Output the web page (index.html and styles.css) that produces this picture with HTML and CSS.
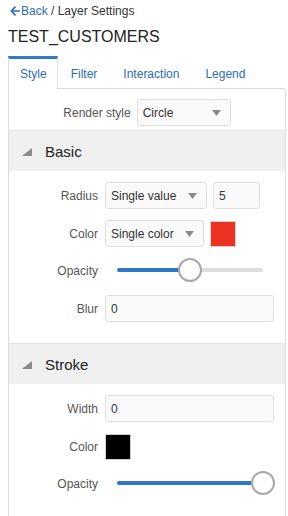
FILE: index.html
```html
<!DOCTYPE html>
<html>
<head>
<meta charset="utf-8">
<link rel="stylesheet" href="styles.css">
</head>
<body>
<div class="crumb">
  <a class="back"><svg class="back-arrow" width="10" height="10" viewBox="0 0 10 10"><path d="M5 1.2 L1.3 5 L5 8.8 M1.3 5 H9.5" fill="none" stroke="#2e6db0" stroke-width="1.7" stroke-linecap="round" stroke-linejoin="round"/></svg>Back</a><span class="sep">&nbsp;/ Layer Settings</span>
</div>
<h1 class="title">TEST_CUSTOMERS</h1>
<div class="tabs">
  <div class="tab active">Style</div>
  <div class="tab">Filter</div>
  <div class="tab">Interaction</div>
  <div class="tab">Legend</div>
</div>
<div class="panel">
  <div class="render-row">
    <span class="label">Render style</span>
    <div class="select w-render"><span>Circle</span><svg class="caret" width="9" height="6" viewBox="0 0 9 6"><path d="M0 0 H9 L4.5 6 Z" fill="#8a8a8a"/></svg></div>
  </div>

  <div class="section-head"><svg class="tri" width="10" height="8" viewBox="0 0 10 8"><path d="M10 0 V8 H0 Z" fill="#8c8c8c"/></svg><span>Basic</span></div>
  <div class="rows">
    <div class="row">
      <span class="label">Radius</span>
      <div class="field">
        <div class="select w-radius"><span>Single value</span><svg class="caret" width="9" height="6" viewBox="0 0 9 6"><path d="M0 0 H9 L4.5 6 Z" fill="#8a8a8a"/></svg></div>
        <div class="input w-num">5</div>
      </div>
    </div>
    <div class="row">
      <span class="label">Color</span>
      <div class="field">
        <div class="select w-color"><span>Single color</span><svg class="caret" width="9" height="6" viewBox="0 0 9 6"><path d="M0 0 H9 L4.5 6 Z" fill="#8a8a8a"/></svg></div>
        <div class="swatch red"></div>
      </div>
    </div>
    <div class="row row-slider">
      <span class="label">Opacity</span>
      <div class="slider">
        <div class="track"><div class="fill" style="width:50%"></div></div>
        <div class="thumb" style="left:50%"></div>
      </div>
    </div>
    <div class="row">
      <span class="label">Blur</span>
      <div class="input">0</div>
    </div>
  </div>

  <div class="section-head"><svg class="tri" width="10" height="8" viewBox="0 0 10 8"><path d="M10 0 V8 H0 Z" fill="#8c8c8c"/></svg><span>Stroke</span></div>
  <div class="rows last">
    <div class="row">
      <span class="label">Width</span>
      <div class="input">0</div>
    </div>
    <div class="row">
      <span class="label">Color</span>
      <div class="field">
        <div class="swatch black"></div>
      </div>
    </div>
    <div class="row row-slider">
      <span class="label">Opacity</span>
      <div class="slider">
        <div class="track"><div class="fill" style="width:100%"></div></div>
        <div class="thumb" style="left:100%"></div>
      </div>
    </div>
  </div>
</div>
</body>
</html>
```

FILE: styles.css
```css
html, body {
  margin: 0;
  height: 516px;
  overflow: hidden;
}
body {
  padding: 0 0 0 8px;
  font-family: "Liberation Sans", Arial, sans-serif;
  color: #333;
  background: #fff;
}
.crumb {
  margin-top: 4px;
  display: flex;
  align-items: center;
  font-size: 12px;
  line-height: 14px;
}
.back {
  display: flex;
  align-items: center;
  gap: 1px;
  margin-left: 2px;
  color: #2e6db0;
}
.back-arrow {
  display: block;
}
.sep {
  color: #333;
}
.title {
  margin: 9px 0 0;
  font-size: 16px;
  line-height: 20px;
  font-weight: normal;
  color: #222;
}
.tabs {
  display: flex;
  margin-top: 9px;
  height: 32px;
}
.tab {
  box-sizing: border-box;
  height: 33px;
  padding: 8px 12px 0;
  border: 1px solid transparent;
  border-top-width: 3px;
  font-size: 12px;
  line-height: 14px;
  color: #2e6db0;
}
.tab.active {
  position: relative;
  z-index: 1;
  padding-left: 11px;
  padding-right: 10px;
  border-color: #dddddd;
  border-top-color: #3079c6;
  border-bottom: none;
  background: #fff;
}
.panel {
  width: 278px;
  box-sizing: border-box;
  border: 1px solid #dddddd;
  border-bottom: none;
  border-top-right-radius: 4px;
  background: #fff;
}
.render-row {
  display: flex;
  justify-content: center;
  align-items: center;
  gap: 6px;
  padding: 10px 0 4px;
}
.label {
  text-align: right;
  font-size: 12px;
  color: #555;
}
.select, .input {
  box-sizing: border-box;
  height: 27px;
  border: 1px solid #dedede;
  border-radius: 3px;
  background: #fafafa;
  display: flex;
  align-items: center;
  font-size: 12px;
  color: #333;
}
.select {
  justify-content: space-between;
  padding: 0 9px 0 5px;
}
.input {
  padding: 0 5px;
}
.caret {
  display: block;
}
.w-render { width: 94px; }
.w-radius { width: 102px; }
.w-color { width: 99px; }
.w-num { width: 47px; }
.section-head {
  box-sizing: border-box;
  height: 41px;
  border-top: 1px solid #e6e6e6;
  background: #f0f0f0;
  display: flex;
  align-items: center;
  gap: 13px;
  padding-left: 13px;
  font-size: 15px;
  color: #222;
}
.tri {
  display: block;
  margin-top: 2px;
}
.rows {
  display: flex;
  flex-direction: column;
  gap: 11px;
  padding: 11px 11px 21px 0;
}
.rows.last {
  padding-bottom: 40px;
}
.row {
  display: grid;
  grid-template-columns: 89px 1fr;
  column-gap: 7px;
  align-items: center;
  min-height: 27px;
}
.row.row-slider {
  min-height: 26px;
}
.field {
  display: flex;
  align-items: center;
  gap: 6px;
}
.swatch {
  box-sizing: border-box;
  width: 26px;
  height: 26px;
  border: 1px solid #cfcfcf;
}
.swatch.red { background: #ea3323; }
.swatch.black { background: #000; }
.slider {
  position: relative;
  height: 26px;
  margin: 0 11px 0 12px;
}
.track {
  position: absolute;
  left: 0;
  right: 0;
  top: 10px;
  height: 4px;
  border-radius: 2px;
  background: #dedede;
}
.fill {
  height: 100%;
  border-radius: 2px;
  background: #2f77c6;
}
.thumb {
  position: absolute;
  top: 0;
  box-sizing: border-box;
  width: 24px;
  height: 24px;
  margin-left: -12px;
  border: 2px solid #a9a9a9;
  border-radius: 50%;
  background: #fff;
}
```
